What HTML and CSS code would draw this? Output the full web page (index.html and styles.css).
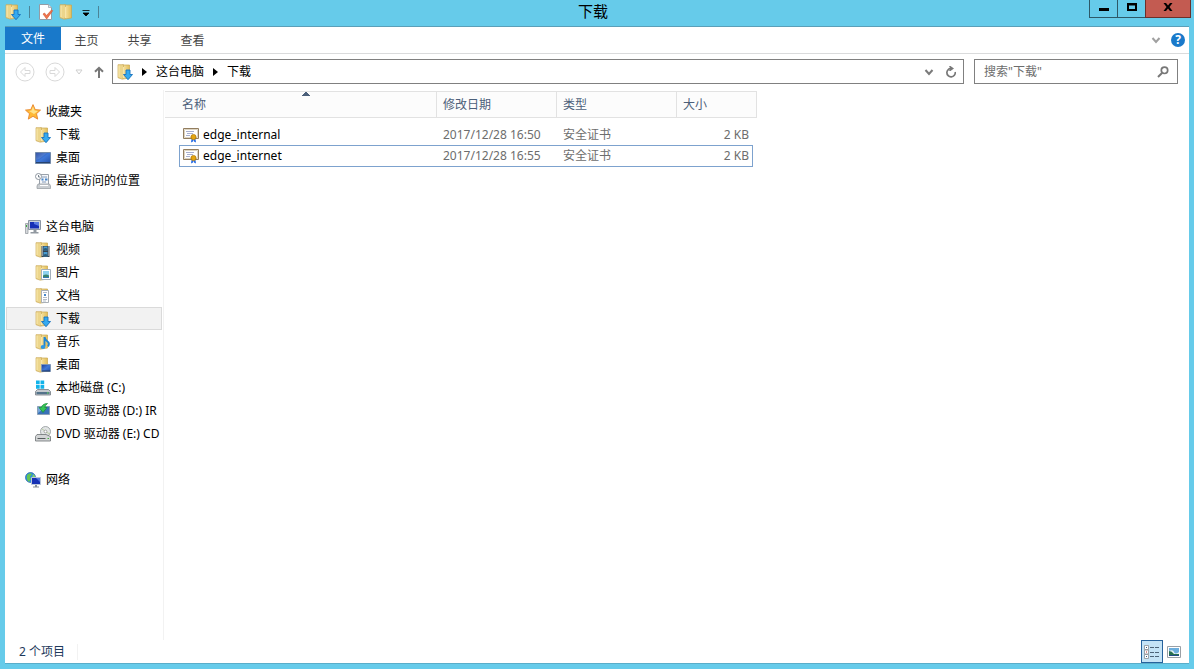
FILE: index.html
```html
<!DOCTYPE html>
<html lang="zh-CN">
<head>
<meta charset="utf-8">
<title>下载</title>
<link rel="stylesheet" href="styles.css">
</head>
<body>
<svg class="defs" aria-hidden="true">
  <defs>
    <linearGradient id="gold" x1="0" x2="1"><stop offset="0" stop-color="#fae9ac"/><stop offset="1" stop-color="#e2bd5a"/></linearGradient>
    <linearGradient id="screen" x1="0" y1="0" x2="1" y2="1"><stop offset="0" stop-color="#1c3a94"/><stop offset=".5" stop-color="#3f78d8"/><stop offset="1" stop-color="#2450a8"/></linearGradient>
    <symbol id="folder" viewBox="0 0 16 16">
      <path d="M5 1h7.500v13L6 15z" fill="url(#gold)" stroke="#c8a64e" stroke-width=".7"/>
      <path d="M1 .7h5.500v12L5.500 15.300 1 13.700z" fill="#ecd58b" stroke="#cba958" stroke-width=".7"/>
      <path d="M2 1.500v11.500M6.500 3v11" stroke="#fff0bb" stroke-width=".8"/>
    </symbol>
    <symbol id="downloads" viewBox="0 0 16 16">
      <use href="#folder"/>
      <path d="M9 6h4v4.500h2.500L11 15.700 6.500 10.500H9z" fill="#35aaf0" stroke="#1773bd" stroke-width=".9"/>
    </symbol>
    <symbol id="desktop" viewBox="0 0 16 16">
      <path d="M.5 2.500h15v11H.5z" fill="url(#screen)" stroke="#7189a9"/>
      <path d="M1 12.500h14" stroke="#26436f"/>
      <path d="M1 3h11L4 9 1 10z" fill="#fff" opacity=".12"/>
    </symbol>
    <symbol id="recent" viewBox="0 0 16 16">
      <path d="M4.500 1.500h9v10h-9z" fill="#f5f7fa" stroke="#9aa2ab"/>
      <path d="M7 4h5M7 9h4" stroke="#8499b7"/><path d="M6.500 5.500h2v2h-2zM10 5.500h2.500v2H10z" fill="#4685c9"/>
      <circle cx="3.500" cy="3.500" r="3" fill="#fff" stroke="#8d959e"/><path d="M3.500 2v2h1.500" fill="none" stroke="#596775" stroke-width=".8"/>
      <path d="m3 11-1 2v2.500h13.500V13l-1-2z" fill="#c9cdd1" stroke="#92989e" stroke-width=".7"/><path d="M5 12.500h8" stroke="#fff"/>
    </symbol>
    <symbol id="star" viewBox="0 0 16 16">
      <path d="m8 .6 2.200 5 5.300.5-4 3.600 1.200 5.400L8 12.300l-4.700 2.800 1.200-5.400-4-3.600 5.300-.5z" fill="#ffb936" stroke="#e8852a" stroke-width=".9"/>
      <path d="m8 2.500 1.500 4 3.500.5-4 3-5-3 2.500-.5z" fill="#ffe28a"/>
    </symbol>
    <symbol id="computer" viewBox="0 0 16 16">
      <path d="M.5 4.500H3v10H.5z" fill="#d6d9dc" stroke="#8e949a" stroke-width=".7"/><path d="M1.500 6v2" stroke="#39a83d"/>
      <path d="M3.500 1.500h12v9h-12z" fill="#ced4dc" stroke="#8b95a3"/><path d="M5 3h9v6.500H5z" fill="#172fb5"/><path d="M9 3h5v4L9 5z" fill="#5879e1"/>
      <path d="M8.500 11h3v2h2v1.500h-8V13h3z" fill="#9299a1"/>
    </symbol>
    <symbol id="videos" viewBox="0 0 16 16">
      <use href="#folder"/><path d="M6.500 4h8v11h-8z" fill="#35434f"/><path d="M8.500 4.500h4v4h-4zM8.500 10h4v4.500h-4z" fill="#489cd2"/><path d="M8.500 7q2-2 4 0v1.500h-4zM8.500 13q2-2 4 0v1.500h-4z" fill="#2e5d78"/><path d="M7.500 4.500v10M13.600 4.500v10" stroke="#eef2f4" stroke-dasharray="1 1"/>
    </symbol>
    <symbol id="pictures" viewBox="0 0 16 16">
      <use href="#folder"/><path d="M6.500 4.500h9v10h-9z" fill="#fff" stroke="#a3afbb"/><path d="M8 6h6v7H8z" fill="#8fd2ee"/><path d="M8 10.500q3-2 6 0V13H8z" fill="#3a836d"/><path d="M8 12.500h6" stroke="#3277b2"/>
    </symbol>
    <symbol id="documents" viewBox="0 0 16 16">
      <use href="#folder"/><path d="M6.500 2.500h7v12h-7z" fill="#fff" stroke="#a9b0b7"/><path d="M8 4.500h4M8 9.500h4M8 11.500h4M8 13h3" stroke="#93a1af" stroke-width=".7"/><path d="M9 6h2v2H9z" fill="#4686c7"/>
    </symbol>
    <symbol id="music" viewBox="0 0 16 16">
      <use href="#folder"/><path d="M9.500 3v9.500M9.500 3q.5 3 3 4.500t.5 5" fill="none" stroke="#1f86d4" stroke-width="1.900"/><ellipse cx="8" cy="13" rx="2.300" ry="1.900" fill="#2c98e4"/>
    </symbol>
    <symbol id="desk-folder" viewBox="0 0 16 16">
      <use href="#folder"/><path d="M6.500 7.500h9v7h-9z" fill="url(#screen)" stroke="#8097b5"/><path d="M7 14h8" stroke="#203b66"/>
    </symbol>
    <symbol id="disk" viewBox="0 0 16 16">
      <path d="M1 .5h3.700v3.700H1zM5.500.5h3.700v3.700H5.500zM1 5h3.700v3.700H1zM5.500 5h3.700v3.700H5.500z" fill="#13b3ea"/>
      <path d="M2.500 9.500h11l2 2v3.500H.5v-3.500z" fill="#c4c9ce" stroke="#737b83" stroke-width=".8"/><path d="M1.500 12h13v2.200h-13z" fill="#53738a"/><path d="M12 13h1.500" stroke="#68ec5d"/>
    </symbol>
    <symbol id="dvd-install" viewBox="0 0 16 16">
      <path d="M2.500 3.500h12v8h-12z" fill="#3972b8" stroke="#8aa0b7"/><path d="M3 4h8L3 10z" fill="#76a7dc"/>
      <path d="M12.500.5Q7 .8 6.500 4.500H4L8 9.500l4-5h-2.200Q10 2.500 12.500.5z" fill="#36c455" stroke="#178d35" stroke-width=".7"/>
    </symbol>
    <symbol id="dvd" viewBox="0 0 16 16">
      <circle cx="10.500" cy="5.500" r="5" fill="#e2e5e5" stroke="#8f9598" stroke-width=".8"/><path d="m7 3 3 2M11 6l4 2" stroke="#b8cc9f"/><circle cx="10.500" cy="5.500" r="1.400" fill="#fff" stroke="#888" stroke-width=".7"/>
      <path d="M2 8.500h9l4.500 2v4.500H.5v-4.500z" fill="#d3d5d6" stroke="#6d7275" stroke-width=".8"/><path d="M2.500 12.500h8" stroke="#575c5f"/><path d="M12.500 12.500H14" stroke="#46b845"/>
    </symbol>
    <symbol id="network" viewBox="0 0 16 16">
      <circle cx="5.500" cy="5.500" r="5" fill="#2c8ce4" stroke="#2362aa" stroke-width=".7"/><path d="M2 3q3-3 5-1L5 5l1 2-2 3Q1 8 2 3z" fill="#65c553"/><path d="M8 2q3 2 2 5L7 6z" fill="#82d067"/>
      <path d="M6.500 5.500h9v7h-9z" fill="#1731b5" stroke="#bac6da"/><path d="M11 6h4v4z" fill="#5277df"/><path d="M10 13h2v1.500h2v1H8v-1h2z" fill="#858d98"/>
    </symbol>
    <symbol id="certificate" viewBox="0 0 16 16">
      <path d="M.5 1.500h15v10H.5z" fill="#fff" stroke="#927d5f"/><path d="M1.500 2.500h13v8h-13z" fill="none" stroke="#ddd4c2"/>
      <path d="M3 4.500h8M4 6.500h6M3 8.500h4" stroke="#929bc3" stroke-width=".8"/>
      <path d="M8.500 12 8 15.500l2-1 .5-2zM12.500 12l.5 3.500-2-1-.5-2z" fill="#2269e4"/><circle cx="10.500" cy="10" r="2.600" fill="#e4a510" stroke="#a87105" stroke-width=".7"/>
    </symbol>
    <symbol id="properties" viewBox="0 0 16 16">
      <path d="M1.500.5h9l3 3v12h-12z" fill="#fff" stroke="#949ca5"/><path d="M10.500.5v3h3" fill="#e3e6ea" stroke="#949ca5" stroke-width=".7"/>
      <path d="m5 10 1.500-1 2 2.500L13.500 6l1.200.7L8.700 15z" fill="#ed744e" stroke="#d7542c" stroke-width=".6"/>
    </symbol>
  </defs>
</svg>
<div class="window">
  <header class="titlebar">
    <div class="quick">
      <svg class="icon"><use href="#downloads"/></svg>
      <span class="divider"></span>
      <button class="plain" aria-label="属性"><svg class="icon"><use href="#properties"/></svg></button>
      <button class="plain" aria-label="新建文件夹"><svg class="icon"><use href="#folder"/></svg></button>
      <button class="plain" aria-label="自定义快速访问工具栏"><svg class="more" viewBox="0 0 8 8"><path d="M.5 1.500h7M1 4h6L4 7z" fill="#000" stroke="#000" stroke-width=".8"/></svg></button>
      <span class="divider"></span>
    </div>
    <h1 class="title">下载</h1>
    <div class="controls">
      <button class="control" aria-label="最小化"><svg viewBox="0 0 12 12"><path d="M1 7h10v3H1z"/></svg></button>
      <button class="control" aria-label="最大化"><svg viewBox="0 0 12 12"><path d="M1 2h10v8H1zM3 4.500v3.500h6V4.500z" fill-rule="evenodd"/></svg></button>
      <button class="control close" aria-label="关闭"><svg viewBox="0 0 12 12"><path d="M1.500 2H4l2 2.500L8 2h2.500L7.500 6l3 4H8L6 7.500 4 10H1.500l3-4z"/></svg></button>
    </div>
  </header>
  <div class="client">
    <nav class="ribbon" aria-label="功能区">
      <button class="tab file">文件</button>
      <button class="tab">主页</button>
      <button class="tab">共享</button>
      <button class="tab">查看</button>
      <div class="ribbon-end">
        <button class="plain" aria-label="展开功能区"><svg class="small" viewBox="0 0 10 10"><path d="M1.500 3 5 7l3.500-4" fill="none" stroke="#a0a0a0" stroke-width="2"/></svg></button>
        <button class="help" aria-label="帮助">?</button>
      </div>
    </nav>
    <div class="location">
      <div class="history">
        <button class="plain" aria-label="后退"><svg class="nav-icon" viewBox="0 0 20 20"><circle cx="10" cy="10" r="9"/><path d="M10 5.500 5.500 10l4.500 4.500v-3h5v-3h-5z"/></svg></button>
        <button class="plain" aria-label="前进"><svg class="nav-icon" viewBox="0 0 20 20"><circle cx="10" cy="10" r="9"/><path d="m10 5.500 4.500 4.500-4.500 4.500v-3H5v-3h5z"/></svg></button>
        <button class="plain" aria-label="最近浏览的位置"><svg class="tiny" viewBox="0 0 8 8"><path d="M1 2h6L4 6z" fill="none" stroke="#cfcfcf"/></svg></button>
        <button class="plain up" aria-label="上移"><svg class="up-icon" viewBox="0 0 12 12"><path d="M6 12V2M2 5.800l4-4 4 4" fill="none" stroke="#777" stroke-width="2"/></svg></button>
      </div>
      <div class="address">
        <svg class="icon"><use href="#downloads"/></svg>
        <svg class="crumb-arrow" viewBox="0 0 5 8"><path d="M0 0v8l5-4z"/></svg>
        <a class="crumb" href="#">这台电脑</a>
        <svg class="crumb-arrow" viewBox="0 0 5 8"><path d="M0 0v8l5-4z"/></svg>
        <a class="crumb" href="#">下载</a>
        <div class="address-end">
          <button class="plain" aria-label="以前的位置"><svg class="small" viewBox="0 0 10 10"><path d="M1.500 3 5 7l3.500-4" fill="none" stroke="#7b7b7b" stroke-width="2"/></svg></button>
          <button class="plain" aria-label="刷新"><svg class="refresh" viewBox="0 0 12 12"><path d="M6.500 2.500A4.200 4.200 0 1 0 10.200 6" fill="none" stroke="#777" stroke-width="1.700"/><path d="M4 0h1.500l3.500 2.500L5.500 5H4l1.500-2.500z" fill="#777"/></svg></button>
        </div>
      </div>
      <form class="search">
        <input class="search-input" type="text" aria-label="搜索下载" placeholder='搜索"下载"'>
        <button class="plain" type="button" aria-label="搜索"><svg class="refresh" viewBox="0 0 12 12"><circle cx="7.500" cy="4.300" r="3.200" fill="none" stroke="#777" stroke-width="1.700"/><path d="M5 7 1 11" stroke="#777" stroke-width="2"/></svg></button>
      </form>
    </div>
    <div class="main">
      <nav class="tree" aria-label="导航窗格">
        <div class="group">
          <a class="node root" href="#"><svg class="icon"><use href="#star"/></svg>收藏夹</a>
          <a class="node" href="#"><svg class="icon"><use href="#downloads"/></svg>下载</a>
          <a class="node" href="#"><svg class="icon"><use href="#desktop"/></svg>桌面</a>
          <a class="node" href="#"><svg class="icon"><use href="#recent"/></svg>最近访问的位置</a>
        </div>
        <div class="group">
          <a class="node root" href="#"><svg class="icon"><use href="#computer"/></svg>这台电脑</a>
          <a class="node" href="#"><svg class="icon"><use href="#videos"/></svg>视频</a>
          <a class="node" href="#"><svg class="icon"><use href="#pictures"/></svg>图片</a>
          <a class="node" href="#"><svg class="icon"><use href="#documents"/></svg>文档</a>
          <a class="node current" href="#"><svg class="icon"><use href="#downloads"/></svg>下载</a>
          <a class="node" href="#"><svg class="icon"><use href="#music"/></svg>音乐</a>
          <a class="node" href="#"><svg class="icon"><use href="#desk-folder"/></svg>桌面</a>
          <a class="node" href="#"><svg class="icon"><use href="#disk"/></svg>本地磁盘 (C:)</a>
          <a class="node" href="#"><svg class="icon"><use href="#dvd-install"/></svg>DVD 驱动器 (D:) IR</a>
          <a class="node" href="#"><svg class="icon"><use href="#dvd"/></svg>DVD 驱动器 (E:) CD</a>
        </div>
        <div class="group">
          <a class="node root" href="#"><svg class="icon"><use href="#network"/></svg>网络</a>
        </div>
      </nav>
      <main class="content">
        <table class="files">
          <thead>
            <tr><th class="sorted" aria-sort="ascending">名称</th><th>修改日期</th><th>类型</th><th>大小</th></tr>
          </thead>
          <tbody>
            <tr><td class="name"><svg class="icon"><use href="#certificate"/></svg>edge_internal</td><td>2017/12/28 16:50</td><td>安全证书</td><td class="size">2 KB</td></tr>
            <tr class="focused"><td class="name"><svg class="icon"><use href="#certificate"/></svg>edge_internet</td><td>2017/12/28 16:55</td><td>安全证书</td><td class="size">2 KB</td></tr>
          </tbody>
        </table>
      </main>
    </div>
    <footer class="status">
      <span class="count">2 个项目</span>
      <div class="views">
        <button class="view active" aria-label="详细信息"><svg class="icon" viewBox="0 0 16 16"><path d="M.5 1.500h4v4h-4zM.5 6h4v4h-4zM.5 10.500h4v4h-4z" fill="#fff" stroke="#8b8f94" stroke-width=".8"/><path d="M2 3.500h1M2 12.500h1" stroke="#345b86"/><path d="M2 8h1" stroke="#b22424"/><path d="M6 3.500h4M11 3.500h4M6 8.500h4M11 8.500h4M6 12.500h4M11 12.500h4" stroke="#4d6478"/></svg></button>
        <button class="view" aria-label="大图标"><svg class="icon" viewBox="0 0 16 16"><path d="M1.500 2.500h13v11h-13z" fill="#fff" stroke="#9aa0a6"/><path d="M3 4h10v8H3z" fill="#6caedd"/><path d="M3 7q4-2 5 1t5 0v2H3z" fill="#e8f4f5"/><path d="M3 7q3 0 5 3h5v2H3z" fill="#28704f"/><path d="M3 11.500h10" stroke="#234c85"/></svg></button>
      </div>
    </footer>
  </div>
</div>
</body>
</html>
```
FILE: styles.css
```css
* { box-sizing: border-box; }

body {
  margin: 0;
  background: #66cbea;
  color: #000;
  font: 12px/16px "Noto Sans", "Noto Sans CJK SC", sans-serif;
}

button { font: inherit; color: inherit; }
a { color: inherit; text-decoration: none; }
.defs { position: absolute; width: 0; height: 0; }
.icon { width: 16px; height: 16px; flex: none; }

.window {
  min-height: 100vh;
  display: flex;
  flex-direction: column;
  padding: 0 5px;
}

.plain {
  display: flex;
  align-items: center;
  justify-content: center;
  padding: 0;
  border: 0;
  background: none;
}

.titlebar {
  display: grid;
  grid-template-columns: 1fr auto 1fr;
  height: 26px;
  padding-right: 8px;
}
.quick { display: flex; align-items: center; gap: 5px; height: 24px; }
.divider { width: 1px; height: 12px; background: #4b8497; margin: 0 3px; }
.more { width: 8px; height: 8px; margin: 2px 0 0 2px; }
.title { margin: 0; font-size: 15px; line-height: 22px; font-weight: 400; }
.controls { display: flex; justify-content: flex-end; height: 18px; margin-right: -10px; }
.control {
  width: 28px;
  display: flex;
  align-items: center;
  justify-content: center;
  padding: 0 0 3px;
  border: 1px solid #2d5968;
  border-width: 0 0 1px 1px;
  background: none;
}
.control svg { width: 12px; height: 12px; }
.control.close { width: 46px; background: #c35b51; border-color: #6b302b; border-right-width: 1px; }

.client {
  flex: 1;
  display: flex;
  flex-direction: column;
  margin-bottom: 5px;
  background: #fff;
  border-top: 1px solid #5b9fb8;
  border-bottom: 1px solid #5aadc9;
}

.ribbon {
  display: flex;
  height: 27px;
  border-bottom: 1px solid #dadbdc;
}
.tab {
  width: 53px;
  padding: 2px 2px 0 0;
  border: 0;
  background: none;
  color: #444;
}
.tab.file { width: 56px; height: 23px; padding: 0; background: #1979ca; color: #fff; }
.ribbon-end { display: flex; align-items: center; gap: 10px; margin-left: auto; padding-right: 4px; }
.small { width: 10px; height: 10px; }
.help {
  width: 14px;
  height: 14px;
  padding: 0;
  border: 0;
  border-radius: 50%;
  background: #1979ca;
  color: #fff;
  font-weight: 700;
  line-height: 14px;
}

.location { display: flex; height: 36px; padding: 5px 11px 6px 10px; gap: 10px; }
.history { display: flex; align-items: center; gap: 10px; width: 87px; }
.nav-icon { width: 20px; height: 20px; fill: none; stroke: #d9d9d9; }
.tiny { width: 8px; height: 8px; }
.up-icon { width: 12px; height: 12px; }
.address { flex: 1; display: flex; align-items: center; gap: 9px; padding: 0 6px 0 4px; border: 1px solid #808080; }
.crumb-arrow { width: 5px; height: 8px; }
.address-end { display: flex; gap: 11px; margin-left: auto; }
.refresh { width: 12px; height: 12px; }
.search { display: flex; width: 204px; padding: 0 8px 0 9px; border: 1px solid #808080; }
.search-input {
  flex: 1;
  min-width: 0;
  padding: 0;
  border: 0;
  outline: 0;
  font: inherit;
  background: none;
}
.search-input::placeholder { color: #6d6d6d; opacity: 1; }

.main { flex: 1; display: flex; }
.tree {
  width: 159px;
  flex: none;
  display: flex;
  flex-direction: column;
  gap: 23px;
  padding: 10px 1px 0;
  border-right: 1px solid #f2f2f2;
}
.node {
  display: flex;
  align-items: center;
  gap: 5px;
  height: 23px;
  padding-left: 28px;
  border: 1px solid transparent;
  overflow: hidden;
  white-space: nowrap;
}
.node.root { padding-left: 18px; }
.node.current { background: #f2f2f2; border-color: #dadada; }

.content { flex: 1; padding: 1px; }
.files { display: block; width: 592px; color: #6d6d6d; }
.files thead, .files tbody { display: block; }
.files tr { display: grid; align-items: center; border: 1px solid transparent; }
.files thead tr {
  grid-template-columns: 1fr 120px 120px 80px;
  height: 27px;
  border-color: #e2e2e2;
  border-left: 0;
  background: #fcfcfc;
}
.files th {
  height: 25px;
  padding: 5px 6px;
  color: #4c607a;
  font-weight: 400;
  text-align: left;
  border-left: 1px solid #e2e2e2;
}
.files th.sorted {
  padding-left: 17px;
  border-left: 0;
  background:
    linear-gradient(to bottom right, transparent 50%, #4c607a 50%) 137px 0 / 4px 4px no-repeat,
    linear-gradient(to bottom left, transparent 50%, #4c607a 50%) 141px 0 / 4px 4px no-repeat;
}
.files tbody { padding: 6px 4px 0 14px; }
.files tbody tr { grid-template-columns: 1fr 120px 120px 76px; height: 22px; }
.files tbody tr + tr { margin-top: -1px; }
.files tbody tr.focused { border-color: #7da2ce; }
.files td { padding: 0 7px; }
.files td.name { display: flex; align-items: center; gap: 4px; padding: 0 3px; color: #000; }
.files td.size { padding: 0 3px; text-align: right; }

.status { display: flex; align-items: center; height: 23px; padding: 0 4px 0 14px; color: #1e395b; }
.count { padding-right: 12px; border-right: 1px solid #f2f2f2; }
.views { display: flex; margin-left: auto; }
.view {
  width: 22px;
  height: 23px;
  display: flex;
  align-items: center;
  justify-content: center;
  padding: 0;
  border: 1px solid transparent;
  background: none;
}
.view.active { border-color: #26629c; background: #c4e3f6; }
```
